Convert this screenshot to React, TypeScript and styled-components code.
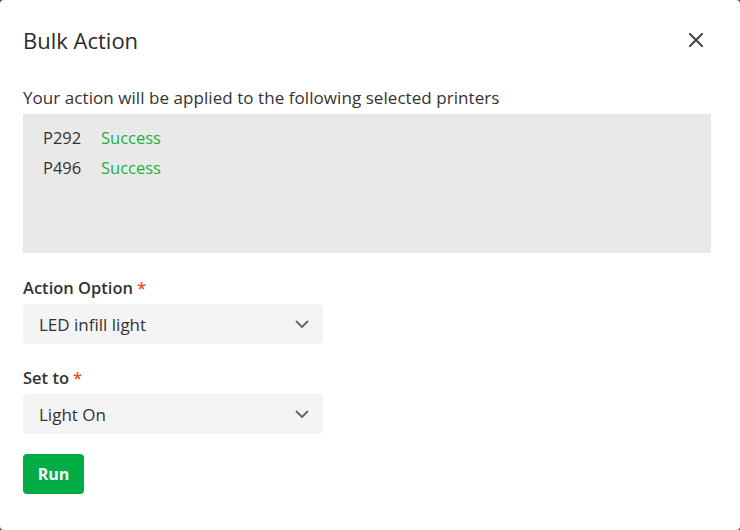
import React from "react";
import styled, { createGlobalStyle } from "styled-components";

const Global = createGlobalStyle`
  html, body { margin: 0; padding: 0; background: #4a4a4a; }
  body { font-family: "Open Sans", "Noto Sans", sans-serif; color: #333; }
  * { box-sizing: border-box; }
`;

const Dialog = styled.div`
  width: 740px;
  height: 530px;
  background: #fff;
  border-radius: 4px;
  padding: 0 23px;
  display: flex;
  flex-direction: column;
`;

const Header = styled.div`
  height: 80px;
  display: flex;
  align-items: center;
  justify-content: space-between;
  padding-right: 9px;
`;

const Title = styled.h2`
  margin: 0;
  font-size: 22px;
  font-weight: 500;
  color: #2b2b2b;
  line-height: 28px;
`;

const Close = styled.button`
  border: none;
  background: none;
  padding: 0;
  width: 24px;
  height: 24px;
  display: flex;
  align-items: center;
  justify-content: center;
  cursor: pointer;
`;

const Intro = styled.div`
  font-size: 17px;
  font-weight: 500;
  letter-spacing: 0.06px;
  color: #333;
  line-height: 22px;
  margin-top: 7px;
`;

const ListBox = styled.div`
  margin-top: 5px;
  width: 688px;
  height: 139px;
  background: #e9e9e9;
  padding: 9px 20px;
  display: flex;
  flex-direction: column;
`;

const Row = styled.div`
  display: flex;
  font-size: 16.5px;
  line-height: 30px;
`;

const Printer = styled.span`
  width: 58px;
  color: #333;
`;

const Status = styled.span`
  color: #22b13e;
`;

const Label = styled.div<{ $first?: boolean }>`
  font-size: 16.5px;
  font-weight: 600;
  color: #333;
  line-height: 22px;
  margin-top: ${(p) => (p.$first ? "24px" : "23px")};
  margin-bottom: 5px;
`;

const Req = styled.span`
  color: #f04a24;
  margin-left: 4px;
`;

const Select = styled.div`
  width: 300px;
  height: 40px;
  background: #f4f4f4;
  border-radius: 4px;
  display: flex;
  align-items: center;
  justify-content: space-between;
  padding: 0 13px 0 16px;
  font-size: 17px;
  color: #333;
`;

const RunButton = styled.button`
  margin-top: 20px;
  width: 61px;
  height: 40px;
  border: none;
  border-radius: 4px;
  background: #00ad45;
  color: #fff;
  font-family: inherit;
  font-size: 16px;
  font-weight: 700;
  cursor: pointer;
`;

const Chevron = () => (
  <svg width="16" height="16" viewBox="0 0 16 16" fill="none">
    <path d="M2.5 5.5 L8 11 L13.5 5.5" stroke="#666" strokeWidth="1.8" strokeLinecap="round" strokeLinejoin="round" />
  </svg>
);

const CloseIcon = () => (
  <svg width="16" height="16" viewBox="0 0 16 16" fill="none">
    <path d="M2 2 L14 14 M14 2 L2 14" stroke="#4a4a4a" strokeWidth="2.2" strokeLinecap="round" />
  </svg>
);

export default function App() {
  const printers = [
    { id: "P292", status: "Success" },
    { id: "P496", status: "Success" },
  ];
  return (
    <>
      <Global />
      <Dialog>
        <Header>
          <Title>Bulk Action</Title>
          <Close aria-label="Close">
            <CloseIcon />
          </Close>
        </Header>
        <Intro>Your action will be applied to the following selected printers</Intro>
        <ListBox>
          {printers.map((p) => (
            <Row key={p.id}>
              <Printer>{p.id}</Printer>
              <Status>{p.status}</Status>
            </Row>
          ))}
        </ListBox>
        <Label $first>
          Action Option<Req>*</Req>
        </Label>
        <Select>
          <span>LED infill light</span>
          <Chevron />
        </Select>
        <Label>
          Set to<Req>*</Req>
        </Label>
        <Select>
          <span>Light On</span>
          <Chevron />
        </Select>
        <div>
          <RunButton>Run</RunButton>
        </div>
      </Dialog>
    </>
  );
}
